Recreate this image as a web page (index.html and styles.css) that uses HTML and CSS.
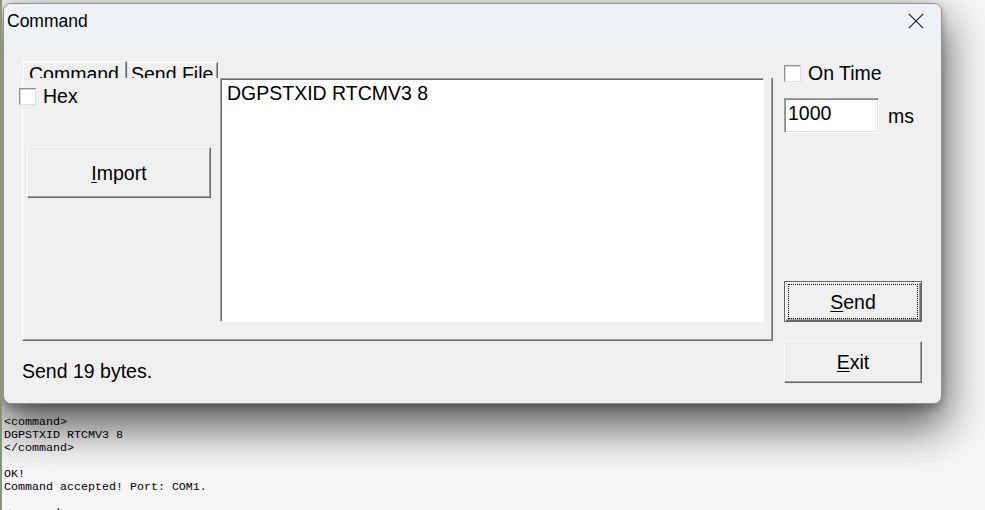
FILE: index.html
```html
<!DOCTYPE html>
<html>
<head>
<meta charset="utf-8">
<title>Command</title>
<link rel="stylesheet" href="styles.css">
</head>
<body>
<div class="desk">
<pre class="log">&lt;command&gt;
DGPSTXID RTCMV3 8
&lt;/command&gt;

OK!
Command accepted! Port: COM1.

&lt;command&gt;</pre>
  <div class="dialog">
    <div class="titlebar">
      <span class="title">Command</span>
      <svg class="close" width="16" height="16" viewBox="0 0 16 16" aria-label="Close"><path d="M0.8 0.8L15.2 15.2M15.2 0.8L0.8 15.2" stroke="#1b1b1b" stroke-width="1.15" fill="none"/></svg>
    </div>
    <div class="body">
      <div class="left">
        <div class="tabs">
          <div class="tab tab-sel">Command</div>
          <div class="tab tab-file">Send File</div>
        </div>
        <div class="panel">
          <div class="page">
            <div class="side">
              <label class="check check-hex"><span class="box"></span><span>Hex</span></label>
              <button class="btn btn-import"><u>I</u>mport</button>
            </div>
            <div class="edit">DGPSTXID RTCMV3 8</div>
          </div>
        </div>
        <div class="status">Send 19 bytes.</div>
      </div>
      <div class="right">
        <label class="check"><span class="box"></span><span>On Time</span></label>
        <div class="interval">
          <div class="field">1000</div>
          <span class="unit">ms</span>
        </div>
        <button class="btn btn-default btn-send"><u>S</u>end</button>
        <button class="btn btn-exit"><u>E</u>xit</button>
      </div>
    </div>
  </div>
</div>
</body>
</html>
```
FILE: styles.css
```css
html, body {
  margin: 0;
  padding: 0;
}
body {
  width: 985px;
  height: 510px;
  overflow: hidden;
  background: #f6f6f6;
}
.desk {
  position: relative;
  height: 510px;
  box-sizing: border-box;
  border-left: 2px solid #8a957a;
  overflow: hidden;
}
.log {
  margin: 0;
  padding: 416px 0 0 2px;
  font-family: "Liberation Mono", monospace;
  font-size: 11.67px;
  line-height: 13px;
  color: #000;
}
.dialog {
  position: absolute;
  left: 1px;
  top: 3px;
  width: 939px;
  height: 401px;
  box-sizing: border-box;
  border: 1px solid #8f8f8f;
  border-radius: 8px;
  background: #f0f0f0;
  overflow: hidden;
  display: flex;
  flex-direction: column;
  box-shadow: 0 20px 44px 4px rgba(0, 0, 0, 0.62), 0 4px 10px rgba(0, 0, 0, 0.25);
  font-family: "Liberation Sans", Arial, sans-serif;
  font-size: 19.5px;
  line-height: 22px;
  color: #000;
}
.titlebar {
  height: 34px;
  flex: none;
  background: #eef2f7;
  display: flex;
  align-items: center;
  justify-content: space-between;
  padding: 0 17px 0 3px;
}
.title {
  font-size: 17.5px;
  color: #000;
}
.close {
  display: block;
  margin-top: -1px;
}
.body {
  flex: 1;
  display: flex;
  gap: 11px;
  padding: 0 19px 20px 18px;
}
.left {
  width: 751px;
  flex: none;
  display: flex;
  flex-direction: column;
  padding-top: 22px;
}
.tabs {
  display: flex;
  height: 18px;
  padding-left: 1px;
  align-items: flex-end;
}
.tab {
  box-sizing: border-box;
  overflow: hidden;
  white-space: nowrap;
  border-style: solid;
  border-width: 1px 1px 0 1px;
  border-color: #fff #696969 transparent #fff;
  box-shadow: inset -1px 0 #a0a0a0;
}
.tab-sel {
  width: 104px;
  height: 17px;
  padding: 1px 0 0 5px;
}
.tab-file {
  width: 91px;
  height: 16px;
  padding: 0 0 0 3px;
  border-left-color: #e3e3e3;
}
.panel {
  height: 263px;
  box-sizing: border-box;
  border-left: 1px solid #fff;
  border-right: 1px solid #6e6e6e;
  border-bottom: 1px solid #6e6e6e;
  box-shadow: inset -1px -1px #a0a0a0;
}
.page {
  display: flex;
  height: 244px;
  margin-left: -1px;
}
.side {
  width: 198px;
  display: flex;
  flex-direction: column;
  align-items: flex-start;
}
.edit {
  width: 544px;
  box-sizing: border-box;
  background: #fff;
  border: 1px solid;
  border-color: #a0a0a0 #fff #fff #a0a0a0;
  box-shadow: inset 1px 1px #696969;
  padding: 3px 0 0 6px;
  white-space: nowrap;
}
.check {
  display: flex;
  align-items: center;
  gap: 7px;
  height: 18px;
}
.check-hex {
  margin: 9px 0 0 -3px;
}
.box {
  width: 17px;
  height: 17px;
  box-sizing: border-box;
  background: #fff;
  border: 1px solid;
  border-color: #8e8e8e #dedede #dedede #8e8e8e;
  box-shadow: inset 1px 1px #d6d6d6;
}
.btn {
  font: inherit;
  line-height: 22px;
  color: #000;
  background: #f0f0f0;
  padding: 0;
  margin: 0;
  box-sizing: border-box;
  border: 1px solid;
  border-color: #fdfdfd #696969 #696969 #fdfdfd;
  box-shadow: inset -1px -1px #a0a0a0, inset 1px 1px #e8e8e8;
  text-align: center;
}
.btn u {
  text-decoration-thickness: 1px;
  text-underline-offset: 2px;
}
.btn-import {
  width: 184px;
  height: 51px;
  margin: 42px 0 0 5px;
}
.right {
  width: 138px;
  flex: none;
  display: flex;
  flex-direction: column;
  padding-top: 26px;
}
.interval {
  display: flex;
  align-items: flex-start;
  margin-top: 16px;
}
.field {
  width: 95px;
  height: 35px;
  box-sizing: border-box;
  background: #fff;
  border: 1px solid;
  border-color: #a0a0a0 #fff #fff #a0a0a0;
  box-shadow: inset 1px 1px #8a8a8a, inset -1px -1px #e3e3e3;
  padding: 3px 0 0 3px;
}
.unit {
  margin: 7px 0 0 9px;
}
.btn-send {
  margin-top: auto;
  width: 138px;
  height: 41px;
}
.btn-default {
  position: relative;
  border-color: #646464;
  box-shadow: inset 1px 1px #fff, inset -1px -1px #696969, inset -2px -2px #a0a0a0;
}
.btn-default::after {
  content: "";
  position: absolute;
  left: 3px;
  right: 3px;
  top: 2px;
  bottom: 2px;
  border: 1px dotted #000;
}
.btn-exit {
  margin-top: 19px;
  width: 138px;
  height: 42px;
}
.status {
  margin-top: 19px;
  white-space: nowrap;
}
```
